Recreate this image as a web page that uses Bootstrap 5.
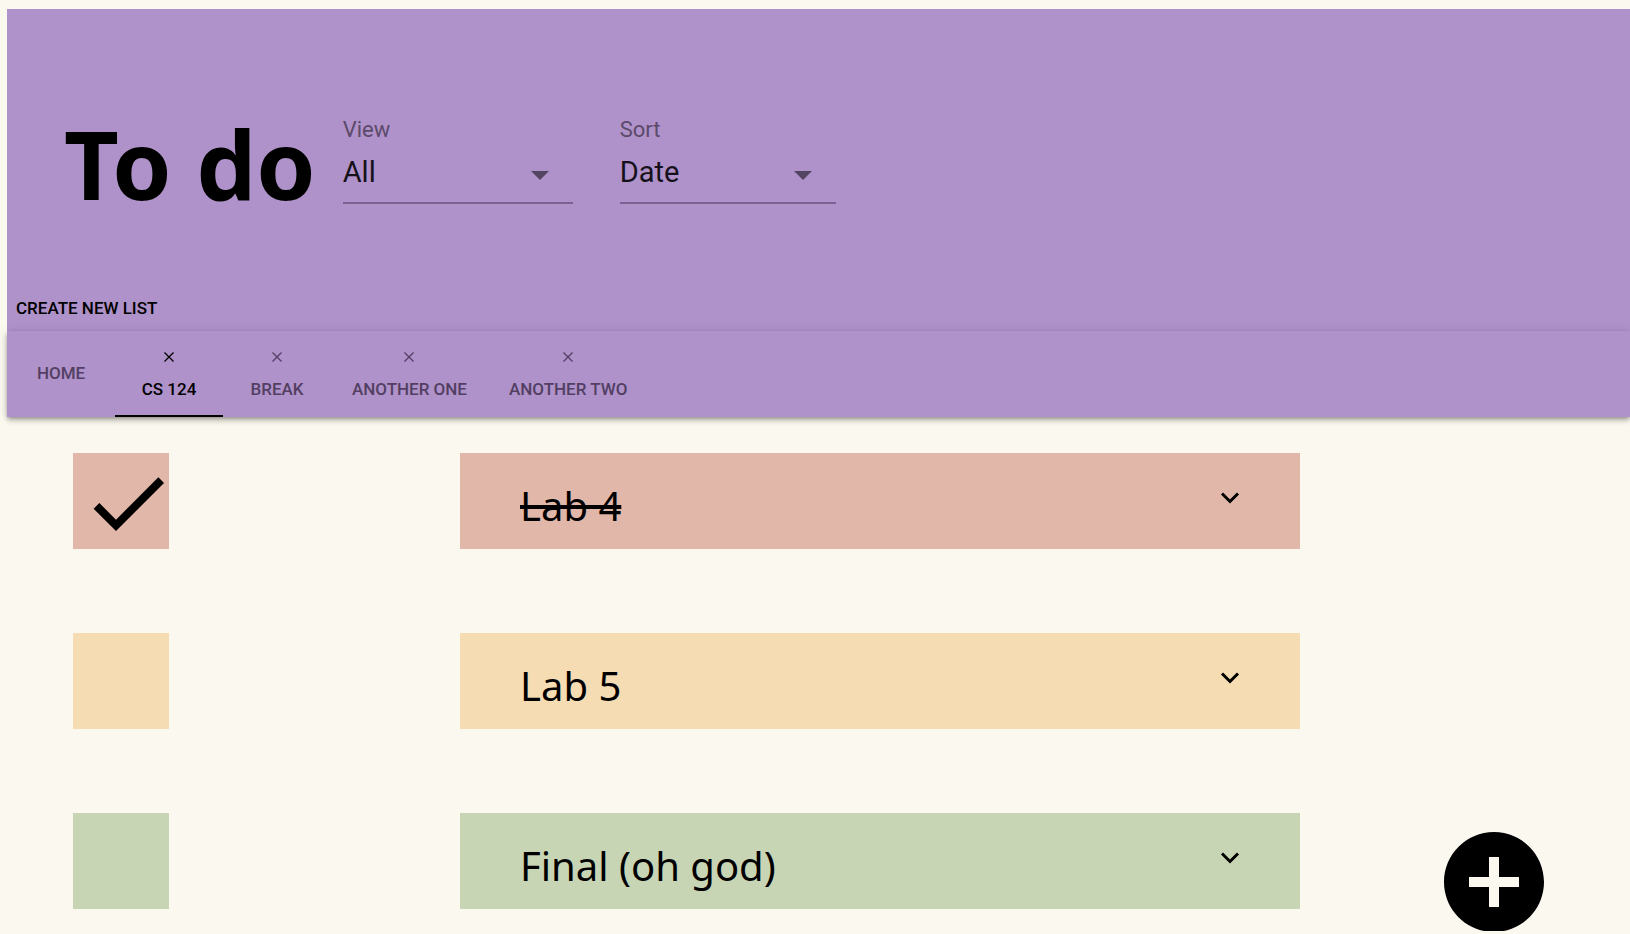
<!DOCTYPE html>
<html lang="en">
<head>
<meta charset="utf-8">
<meta name="viewport" content="width=device-width, initial-scale=1">
<title>To do</title>
<link rel="stylesheet" href="https://cdn.jsdelivr.net/npm/bootstrap@5.3.0/dist/css/bootstrap.min.css">
<style>
  body { background: #fbf8ef; color: #000; font-family: "Noto Sans", "Open Sans", sans-serif; overflow-x: hidden; }
  .purple { background: #af92c9; }
  .shell { padding: 9px 0 0 7px; }
  .masthead { padding: 98px 0 0 57px; height: 279px; }
  .masthead h1 { font-size: 95px; line-height: 112px; font-weight: 700; margin-right: 27px; }
  .roboto { font-family: Roboto, sans-serif; }
  .picker { width: 230px; margin: 11px 47px 0 0; }
  .picker.narrow { width: 216px; }
  .picker label { display: block; font-size: 22px; line-height: 24px; color: #5c4a6b; }
  .picker select {
    appearance: none; width: 100%; height: 62px; padding: 0; border: 0; border-radius: 0;
    border-bottom: 2px solid #7a6291; color: #15111a; font-size: 29px; line-height: 40px;
    background: transparent url("data:image/svg+xml,%3Csvg xmlns='http://www.w3.org/2000/svg' width='18' height='9'%3E%3Cpath d='M0 0h18l-9 9z' fill='%23534460'/%3E%3C/svg%3E") no-repeat right 24px top 29px;
  }
  .new-list { padding: 0 9px; height: 43px; font-size: 17px; font-weight: 500; line-height: 24px; color: #000; border: 0; background: none; }
  .tabbar { height: 86px; box-shadow: 0 2px 4px -1px rgba(0,0,0,.3), 0 4px 5px rgba(0,0,0,.14), 0 1px 10px rgba(0,0,0,.12); }
  .tab { min-width: 108px; padding: 0 21px; border: 0; border-bottom: 2px solid transparent; background: none; color: #523f63; font-size: 17px; font-weight: 500; line-height: 22px; }
  .tab.flex-column { padding-top: 6px; }
  .tab svg { margin-bottom: 16px; }
  .tab.active { color: #000; border-color: #000; }
  .tasks { padding: 36px 330px 24px 73px; }
  .tasks li + li { margin-top: 84px; }
  .tick { appearance: none; flex: none; width: 96px; height: 96px; margin: 0 291px 0 0; }
  .tick:checked { background-image: url("data:image/svg+xml,%3Csvg xmlns='http://www.w3.org/2000/svg' width='96' height='96' viewBox='0 0 24 24'%3E%3Cpath d='M9 16.17 4.83 12l-1.42 1.41L9 19 21 7l-1.41-1.41z'/%3E%3C/svg%3E"); background-position: 7px 2px; background-repeat: no-repeat; }
  .task { height: 96px; padding: 0 60px; }
  .task label { font-size: 40px; line-height: 60px; font-weight: 400; padding-top: 23px; }
  .tick:checked + .task label { text-decoration: line-through; text-decoration-thickness: 4px; }
  .expand { height: 90px; width: 20px; padding: 0; border: 0; background: none; display: flex; align-items: center; justify-content: center; }
  .rose { background-color: #e1b7aa; }
  .sand { background-color: #f5dcb3; }
  .sage { background-color: #c8d5b5; }
  .add { position: fixed; right: 76px; bottom: 3px; height: 109px; padding: 0; border: 0; background: none; overflow: hidden; }
</style>
</head>
<body>
<div class="shell">
  <header class="purple">
    <div class="masthead d-flex align-items-start">
      <h1 class="mb-0 text-nowrap">To do</h1>
      <div class="picker roboto"><label for="view">View</label><select id="view"><option>All</option></select></div>
      <div class="picker narrow roboto"><label for="sort">Sort</label><select id="sort"><option>Date</option></select></div>
    </div>
    <button class="new-list roboto d-flex pt-2" type="button">CREATE NEW LIST</button>
  </header>
  <nav class="tabbar purple roboto d-flex" aria-label="Lists">
    <button class="tab" type="button">HOME</button>
    <button class="tab active d-flex flex-column align-items-center justify-content-center" type="button"><svg width="10" height="10" viewBox="0 0 10 10" stroke="currentColor" stroke-width="1.3"><path d="M.5.5l9 9M9.500.5l-9 9"/></svg>CS 124</button>
    <button class="tab d-flex flex-column align-items-center justify-content-center" type="button"><svg width="10" height="10" viewBox="0 0 10 10" stroke="currentColor" stroke-width="1.3"><path d="M.5.5l9 9M9.500.5l-9 9"/></svg>BREAK</button>
    <button class="tab d-flex flex-column align-items-center justify-content-center" type="button"><svg width="10" height="10" viewBox="0 0 10 10" stroke="currentColor" stroke-width="1.3"><path d="M.5.5l9 9M9.500.5l-9 9"/></svg>ANOTHER ONE</button>
    <button class="tab d-flex flex-column align-items-center justify-content-center" type="button"><svg width="10" height="10" viewBox="0 0 10 10" stroke="currentColor" stroke-width="1.3"><path d="M.5.5l9 9M9.500.5l-9 9"/></svg>ANOTHER TWO</button>
  </nav>
</div>
<main>
  <ul class="tasks list-unstyled mb-0">
    <li class="d-flex">
      <input class="tick rose" type="checkbox" id="t1" checked>
      <div class="task rose flex-grow-1 d-flex justify-content-between align-items-start"><label for="t1">Lab 4</label>
        <button class="expand" type="button" aria-label="Expand"><svg width="20" height="12" viewBox="0 0 20 12" fill="none" stroke="#000" stroke-width="3"><path d="M2 1.500l8 8 8-8"/></svg></button></div>
    </li>
    <li class="d-flex">
      <input class="tick sand" type="checkbox" id="t2">
      <div class="task sand flex-grow-1 d-flex justify-content-between align-items-start"><label for="t2">Lab 5</label>
        <button class="expand" type="button" aria-label="Expand"><svg width="20" height="12" viewBox="0 0 20 12" fill="none" stroke="#000" stroke-width="3"><path d="M2 1.500l8 8 8-8"/></svg></button></div>
    </li>
    <li class="d-flex">
      <input class="tick sage" type="checkbox" id="t3">
      <div class="task sage flex-grow-1 d-flex justify-content-between align-items-start"><label for="t3">Final (oh god)</label>
        <button class="expand" type="button" aria-label="Expand"><svg width="20" height="12" viewBox="0 0 20 12" fill="none" stroke="#000" stroke-width="3"><path d="M2 1.500l8 8 8-8"/></svg></button></div>
    </li>
  </ul>
</main>
<button class="add" type="button" aria-label="Add task"><svg class="d-block" width="120" height="120" viewBox="0 0 24 24"><path d="M12 2C6.480 2 2 6.480 2 12s4.480 10 10 10 10-4.480 10-10S17.520 2 12 2zm5 11h-4v4h-2v-4H7v-2h4V7h2v4h4v2z"/></svg></button>
<script src="https://cdn.jsdelivr.net/npm/bootstrap@5.3.0/dist/js/bootstrap.bundle.min.js"></script>
</body>
</html>
